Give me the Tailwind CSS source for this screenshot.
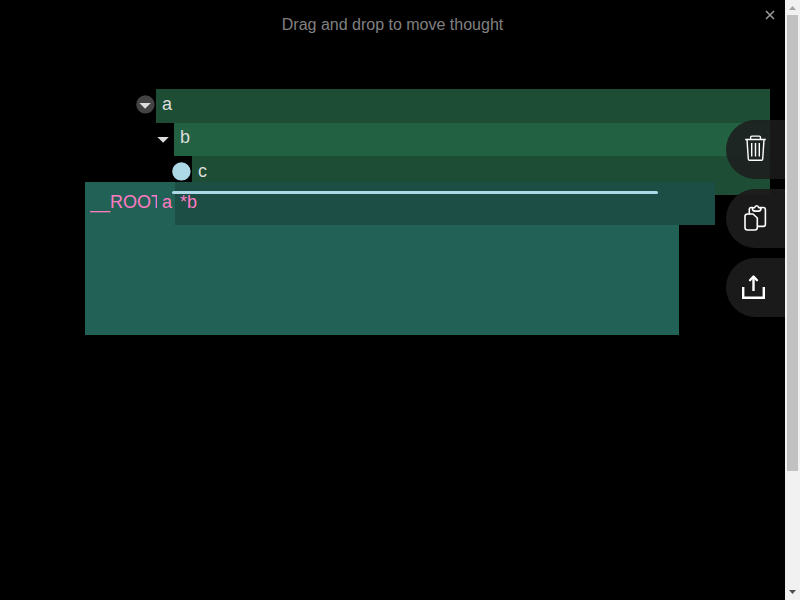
<!DOCTYPE html>
<html lang="en">
<head>
<meta charset="utf-8">
<meta name="viewport" content="width=device-width, initial-scale=1">
<title>Thoughts</title>
<script src="https://cdn.jsdelivr.net/npm/@tailwindcss/browser@4"></script>
</head>
<body class="flex h-screen overflow-hidden bg-black font-['Liberation_Sans',Arial,sans-serif] text-lg leading-5 text-[#dcdcdc]">
<main class="relative min-w-0 flex-1">
  <header class="flex h-[89px] justify-center pt-[15px]">
    <p class="text-base leading-5 text-[#808080]">Drag and drop to move thought</p>
    <button type="button" aria-label="Close" class="absolute top-2 right-2 flex size-[14px] items-center justify-center">
      <svg class="size-[10px]" viewBox="0 0 10 10" fill="none" stroke="#999" stroke-width="1.6"><path d="M1 1l8 8M9 1L1 9"/></svg>
    </button>
  </header>

  <!-- Thought tree: each level is indented by one bullet width -->
  <ul class="pr-[15px] pl-[136px]">
    <li>
      <div class="flex">
        <button type="button" aria-label="Collapse a" class="flex h-[30px] w-5 items-center">
          <svg class="size-[19px]" viewBox="0 0 19 19"><circle cx="9.4" cy="9.4" r="9.2" fill="#434343"/><path d="M3.4 8.1h11.4L9.1 13.8z" fill="#dcdcdc"/></svg>
        </button>
        <span class="h-[34px] flex-1 bg-[#1d4e35] px-[6px] pt-[5px]">a</span>
      </div>
      <ul class="pl-[18px]">
        <li>
          <div class="flex">
            <button type="button" aria-label="Collapse b" class="flex h-[30px] w-5 items-center">
              <svg class="size-[19px]" viewBox="0 0 19 19"><path d="M3.4 8.1h11.4L9.1 13.8z" fill="#dcdcdc"/></svg>
            </button>
            <span class="h-[33px] flex-1 bg-[#226142] px-[6px] pt-1">b</span>
          </div>
          <ul class="pl-[18px]">
            <li class="flex">
              <span class="flex h-[30px] w-5 items-center">
                <svg class="size-[19px]" viewBox="0 0 19 19"><circle cx="9.4" cy="9.4" r="9.2" fill="#add8e6"/></svg>
              </span>
              <span class="h-[39px] flex-1 bg-[#1d4e35] px-[6px] pt-[5px]">c</span>
            </li>
          </ul>
        </li>
      </ul>
    </li>
  </ul>

  <!-- Drop targets laid over the tree -->
  <div class="absolute top-[182px] right-[106px] left-[85px] flex h-[153px] bg-[#226256] pt-[10px] pl-[5px] text-[#ff7ac2]">
    <span class="w-[67px] overflow-hidden">__ROOT</span>
    <span class="pl-[5px]">a</span>
  </div>
  <div class="absolute top-[182px] right-[70px] left-[175px] h-[43px] bg-[#1c4e45] pt-[10px] pl-[5px] text-[#ff7ac2]">*b</div>
  <div class="absolute top-[191px] right-[127px] left-[172px] h-[3px] rounded-sm bg-[#add8e6]"></div>

  <!-- Quick drop actions -->
  <div class="absolute top-[120px] right-0 flex flex-col gap-[10px] text-white">
    <button type="button" aria-label="Delete" class="flex h-[59px] w-[59px] items-center justify-center rounded-l-full bg-[#1c1c1c]/85">
      <svg class="h-[29px] w-[29px]" viewBox="0 0 29 29" fill="none" stroke="currentColor" stroke-width="1.4" stroke-linejoin="round"><path d="M4.2 4.5h20.6M9.6 4.3V2.4q0-1.3 1.3-1.3h7.3q1.3 0 1.3 1.3v1.9M6 4.6l1.3 19.4q.1 1.2 1.3 1.2h11.8q1.2 0 1.3-1.2L23 4.6M10.7 8v13.5M14.5 8v13.5M18.3 8v13.5"/></svg>
    </button>
    <button type="button" aria-label="Copy" class="flex h-[59px] w-[59px] items-center justify-center rounded-l-full bg-[#1b1b1b]/95">
      <svg class="h-[29px] w-[29px]" viewBox="0 0 29 29" fill="none" stroke="currentColor" stroke-width="1.6" stroke-linejoin="round" stroke-linecap="round"><path d="M4 12.5q0-2.5 2.5-2.5h5.5L16.3 14v9.5q0 2.5-2.5 2.5H6.5Q4 26 4 23.5z"/><path d="M8.3 9.8V5.5q0-2 2-2h1.4M18.6 3.5h3.6q2.2 0 2.2 2.2v14.5q0 2.2-2.2 2.2h-5.4"/><path d="M11.3 3.7h2.4q.4-2 2-2t2 2h2.4q0 3.4-2.7 3.4h-3.4q-2.7 0-2.7-3.4z"/></svg>
    </button>
    <button type="button" aria-label="Export" class="flex h-[59px] w-[59px] items-center justify-center rounded-l-full bg-[#1b1b1b]/95 pr-1">
      <svg class="h-[29px] w-[29px]" viewBox="0 0 29 29" fill="none" stroke="currentColor" stroke-width="2.4"><path d="M4.2 14v10.7h20.6V14M14.5 18V4"/><path d="M11 7.2l3.5-3.7L18 7.2" stroke-linecap="round" stroke-linejoin="round"/></svg>
    </button>
  </div>
</main>

<!-- Scroll bar -->
<aside aria-hidden="true" class="flex w-[15px] flex-col items-center bg-[#f1f1f1]">
  <svg class="h-[15px] w-[15px]" viewBox="0 0 15 15" fill="#a3a3a3"><path d="M4 10h7L7.5 6z"/></svg>
  <div class="flex min-h-0 w-full flex-1 flex-col px-[2px]"><div class="h-4/5 bg-[#c1c1c1]"></div></div>
  <svg class="h-[15px] w-[15px]" viewBox="0 0 15 15" fill="#505050"><path d="M4 5h7L7.5 9z"/></svg>
</aside>
</body>
</html>
